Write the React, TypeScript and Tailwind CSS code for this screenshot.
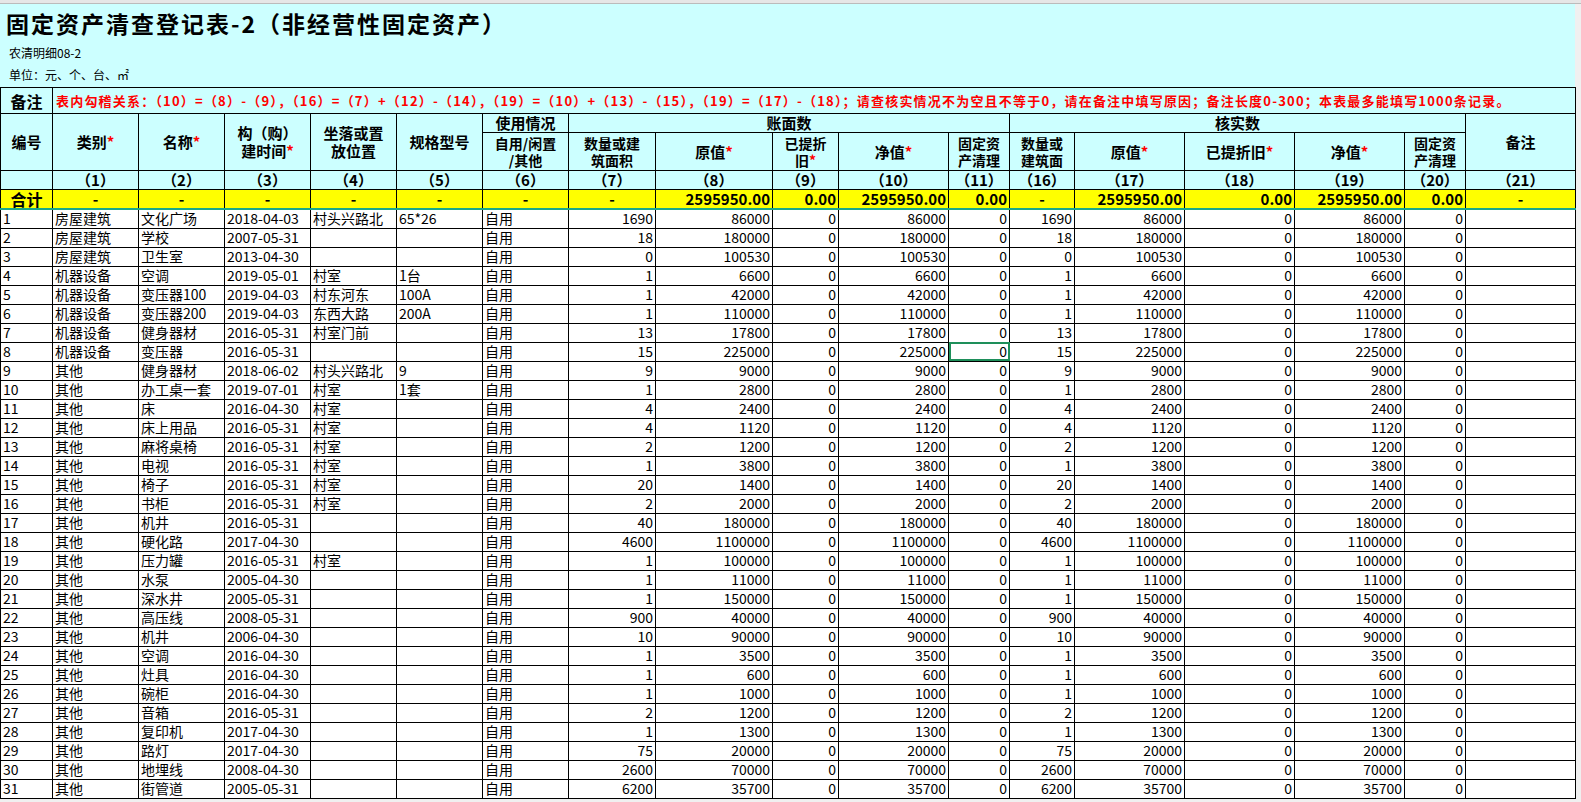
import React from 'react';

const W = [52, 86, 86, 86, 86, 86, 86, 87, 117, 66, 110, 61, 65, 110, 110, 110, 61, 110];

// 类别, 名称, 时间, 坐落, 规格, 数量, 原值
const rows: [string, string, string, string, string, number, number][] = [
  ['房屋建筑', '文化广场', '2018-04-03', '村头兴路北', '65*26', 1690, 86000],
  ['房屋建筑', '学校', '2007-05-31', '', '', 18, 180000],
  ['房屋建筑', '卫生室', '2013-04-30', '', '', 0, 100530],
  ['机器设备', '空调', '2019-05-01', '村室', '1台', 1, 6600],
  ['机器设备', '变压器100', '2019-04-03', '村东河东', '100A', 1, 42000],
  ['机器设备', '变压器200', '2019-04-03', '东西大路', '200A', 1, 110000],
  ['机器设备', '健身器材', '2016-05-31', '村室门前', '', 13, 17800],
  ['机器设备', '变压器', '2016-05-31', '', '', 15, 225000],
  ['其他', '健身器材', '2018-06-02', '村头兴路北', '9', 9, 9000],
  ['其他', '办工桌一套', '2019-07-01', '村室', '1套', 1, 2800],
  ['其他', '床', '2016-04-30', '村室', '', 4, 2400],
  ['其他', '床上用品', '2016-05-31', '村室', '', 4, 1120],
  ['其他', '麻将桌椅', '2016-05-31', '村室', '', 2, 1200],
  ['其他', '电视', '2016-05-31', '村室', '', 1, 3800],
  ['其他', '椅子', '2016-05-31', '村室', '', 20, 1400],
  ['其他', '书柜', '2016-05-31', '村室', '', 2, 2000],
  ['其他', '机井', '2016-05-31', '', '', 40, 180000],
  ['其他', '硬化路', '2017-04-30', '', '', 4600, 1100000],
  ['其他', '压力罐', '2016-05-31', '村室', '', 1, 100000],
  ['其他', '水泵', '2005-04-30', '', '', 1, 11000],
  ['其他', '深水井', '2005-05-31', '', '', 1, 150000],
  ['其他', '高压线', '2008-05-31', '', '', 900, 40000],
  ['其他', '机井', '2006-04-30', '', '', 10, 90000],
  ['其他', '空调', '2016-04-30', '', '', 1, 3500],
  ['其他', '灶具', '2016-04-30', '', '', 1, 600],
  ['其他', '碗柜', '2016-04-30', '', '', 1, 1000],
  ['其他', '音箱', '2016-05-31', '', '', 2, 1200],
  ['其他', '复印机', '2017-04-30', '', '', 1, 1300],
  ['其他', '路灯', '2017-04-30', '', '', 75, 20000],
  ['其他', '地埋线', '2008-04-30', '', '', 2600, 70000],
  ['其他', '街管道', '2005-05-31', '', '', 6200, 35700],
];

const Star = () => <span className="text-[#ff0000]">*</span>;

const th = 'border border-black font-bold text-[15px] leading-[18px] text-center align-middle p-0 overflow-hidden';
const th2 = 'border border-black font-bold text-[14px] leading-[17px] text-center align-middle p-0 overflow-hidden';
const td = 'border border-black h-[19px] p-0 px-[2px] text-[14px] leading-[17px] whitespace-nowrap overflow-hidden';

export default function App() {
  const total = W.reduce((a, b) => a + b, 0);
  return (
    <div className="w-[1581px] h-[802px] overflow-hidden bg-[#f0f0f0] text-black" style={{ fontFamily: '"Noto Sans CJK SC", "Liberation Sans", sans-serif' }}>
      <div className="h-[4px] bg-[#e6e6e6] border-b border-[#bbb]" />
      <div className="bg-[#ccffff]" style={{ width: total }}>
        <div className="h-[38px] pl-[6px] text-[23px] font-bold leading-[38px] tracking-[2px]">固定资产清查登记表-2（非经营性固定资产）</div>
        <div className="h-[22px] pl-[9px] text-[12px] leading-[22px]">农清明细08-2</div>
        <div className="h-[23px] pl-[9px] text-[12px] leading-[22px]">单位：元、个、台、㎡</div>
      </div>
      <table className="table-fixed border-collapse bg-[#ccffff]" style={{ width: total }}>
        <colgroup>
          {W.map((w, i) => <col key={i} style={{ width: w }} />)}
        </colgroup>
        <tbody>
          <tr className="h-[26px]">
            <td className={th + ' text-[16px]'}>备注</td>
            <td colSpan={17} className="border border-black p-0 pl-[3px] text-[13px] tracking-[1.2px] font-bold text-[#ff0000] whitespace-nowrap overflow-hidden">
              表内勾稽关系：（10）=（8）-（9），（16）=（7）+（12）-（14），（19）=（10）+（13）-（15），（19）=（17）-（18）；请查核实情况不为空且不等于0，请在备注中填写原因；备注长度0-300；本表最多能填写1000条记录。
            </td>
          </tr>
          <tr className="h-[19px]">
            <td rowSpan={2} className={th}>编号</td>
            <td rowSpan={2} className={th}>类别<Star /></td>
            <td rowSpan={2} className={th}>名称<Star /></td>
            <td rowSpan={2} className={th}>构（购）<br />建时间<Star /></td>
            <td rowSpan={2} className={th}>坐落或置<br />放位置</td>
            <td rowSpan={2} className={th}>规格型号</td>
            <td className={th}>使用情况</td>
            <td colSpan={5} className={th}>账面数</td>
            <td colSpan={5} className={th}>核实数</td>
            <td rowSpan={2} className={th}>备注</td>
          </tr>
          <tr className="h-[38px]">
            <td className={th2}>自用/闲置<br />/其他</td>
            <td className={th2}>数量或建<br />筑面积</td>
            <td className={th}>原值<Star /></td>
            <td className={th2}>已提折<br />旧<Star /></td>
            <td className={th}>净值<Star /></td>
            <td className={th2}>固定资<br />产清理</td>
            <td className={th2}>数量或<br />建筑面</td>
            <td className={th}>原值<Star /></td>
            <td className={th}>已提折旧<Star /></td>
            <td className={th}>净值<Star /></td>
            <td className={th2}>固定资<br />产清理</td>
          </tr>
          <tr className="h-[19px]">
            <td className={th} />
            {['1', '2', '3', '4', '5', '6', '7', '8', '9', '10', '11', '16', '17', '18', '19', '20', '21'].map((n) => (
              <td key={n} className={th + ' text-[14px]'}>（{n}）</td>
            ))}
          </tr>
          <tr className="h-[19px] bg-[#ffff00] border-b-2 border-[#1aa88a]">
            <td className={th + ' text-[16px]'}>合计</td>
            {['-', '-', '-', '-', '-', '-', '-'].map((s, i) => <td key={i} className={th + ' text-[13px]'}>{s}</td>)}
            <td className={th + ' text-right pr-[2px] text-[14px]'}>2595950.00</td>
            <td className={th + ' text-right pr-[2px] text-[14px]'}>0.00</td>
            <td className={th + ' text-right pr-[2px] text-[14px]'}>2595950.00</td>
            <td className={th + ' text-right pr-[2px] text-[14px]'}>0.00</td>
            <td className={th + ' text-[13px]'}>-</td>
            <td className={th + ' text-right pr-[2px] text-[14px]'}>2595950.00</td>
            <td className={th + ' text-right pr-[2px] text-[14px]'}>0.00</td>
            <td className={th + ' text-right pr-[2px] text-[14px]'}>2595950.00</td>
            <td className={th + ' text-right pr-[2px] text-[14px]'}>0.00</td>
            <td className={th + ' text-[13px]'}>-</td>
          </tr>
          {rows.map((r, i) => (
            <tr key={i} className="bg-white">
              <td className={td}>{i + 1}</td>
              <td className={td}>{r[0]}</td>
              <td className={td}>{r[1]}</td>
              <td className={td}>{r[2]}</td>
              <td className={td}>{r[3]}</td>
              <td className={td}>{r[4]}</td>
              <td className={td}>自用</td>
              <td className={td + ' text-right'}>{r[5]}</td>
              <td className={td + ' text-right'}>{r[6]}</td>
              <td className={td + ' text-right'}>0</td>
              <td className={td + ' text-right'}>{r[6]}</td>
              <td className={td + ' text-right' + (i === 7 ? ' outline-2 -outline-offset-2 outline-[#1e8f5a]' : '')}>0</td>
              <td className={td + ' text-right'}>{r[5]}</td>
              <td className={td + ' text-right'}>{r[6]}</td>
              <td className={td + ' text-right'}>0</td>
              <td className={td + ' text-right'}>{r[6]}</td>
              <td className={td + ' text-right'}>0</td>
              <td className={td} />
            </tr>
          ))}
        </tbody>
      </table>
    </div>
  );
}
